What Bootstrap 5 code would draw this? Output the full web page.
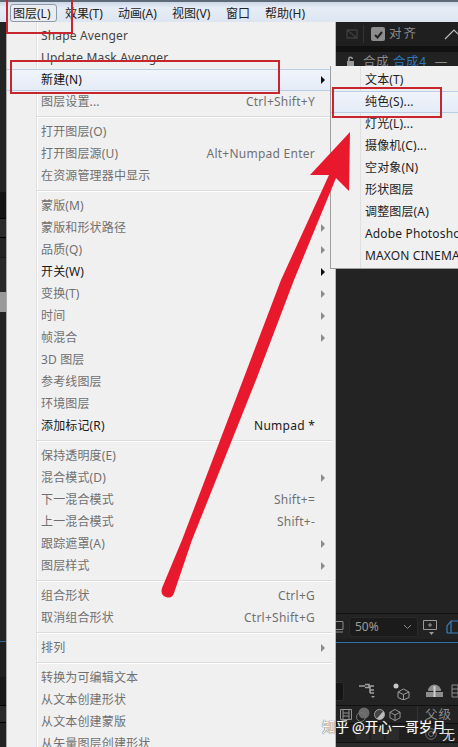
<!DOCTYPE html>
<html lang="zh">
<head>
<meta charset="utf-8">
<title>图层菜单</title>
<link href="https://cdn.jsdelivr.net/npm/bootstrap@5.3.0/dist/css/bootstrap.min.css" rel="stylesheet">
<style>
html,body{margin:0;background:#232323}
.shot{width:458px;height:747px;font:12px/22px "Noto Sans","Noto Sans CJK SC",sans-serif;color:#1c1c1c}
.mbar{height:22px;padding:2px 0 0 10px;background:linear-gradient(#cdd7e6,#e6edf6 30%,#dde5f1);border-top:2px solid #5d6a78;line-height:19px;color:#222}
.mbar span{flex:none;white-space:nowrap}
.m1{width:47px;padding-left:2px;height:18px;border:1px solid #8f9aa8;border-radius:3px;background:#e9edf2;line-height:17px}
.m2{width:54px;padding-left:8px}.m3{width:54px;padding-left:7px}.m4{width:54px;padding-left:7px}.m5{width:39px;padding-left:7px}.m6{padding-left:7px}
.stage{height:725px}
.lstrip{width:6px;background:#232323;flex:none}
.lstrip i{display:block}
.b1{height:170px}.b2{height:26px;background:#131313}.b3{height:20px;background:#2b2b2b;border-top:1px solid #000;border-bottom:1px solid #000}.b4{height:20px;border-bottom:1px solid #1a1a1a}.b5{height:34px;background:#282828}.b6{height:20px;background:#999}.b7{height:329px}.b8{height:36px;background:#1f1f1f;border-top:1px solid #2f6a9c}.b9{height:28px;background:#181818}.b10{height:18px;background:#2a2a2a;border-top:1px solid #000;border-bottom:1px solid #000}
.pop{background-color:#f0f0f0}
.amenu{width:330px;flex:none;padding-top:3px;border-left:1px solid #aaa;border-right:1px solid #b5b5b5;background-image:linear-gradient(90deg,transparent 29px,#e0e0e0 29px,#e0e0e0 30px,#fff 30px,#fff 31px,transparent 31px)}
.mrow{height:22px;line-height:22px;padding-left:34px;color:#707070;white-space:nowrap;letter-spacing:.15px}
.mrow.on{color:#1a1a1a}
.mrow.soft{color:#444}
.mrow.hot{color:#111;background:linear-gradient(#f1f5fb,#e3ebf7);box-shadow:inset 0 1px #b8cde6,inset 0 -1px #b8cde6}
.mkey{margin-left:auto;letter-spacing:.25px}
.marr{flex:none;width:20px;display:flex;align-items:center;padding-left:6px}
.marr::before{content:"";border-left:4px solid #8b8b8b;border-top:4px solid transparent;border-bottom:4px solid transparent}
.on .marr::before,.hot .marr::before{border-left-color:#111}
.msep{height:8px;margin-left:30px;margin-right:3px;padding-top:3px}
.msep::before{content:"";display:block;height:2px;background:linear-gradient(#dcdcdc 50%,#fff 50%)}
.smenu{left:330px;top:66px;width:128px;height:203px;padding-top:3px;border-left:1px solid #a0a0a0;border-bottom:1px solid #a0a0a0;background-image:linear-gradient(90deg,transparent 29px,#e0e0e0 29px,#e0e0e0 30px,transparent 30px);z-index:2}
.smenu .mrow{padding-left:34px;color:#1d1d1d}
.dark{background:#232323;color:#8a8a8a;min-width:0}
.tb1{height:24px;background:#1f1f1f;padding-left:9px;line-height:22px;color:#8c8c8c;font-size:12.5px;letter-spacing:2px;flex:none}
.vdiv{width:1px;height:18px;background:#333;margin:0 7px 0 4px;flex:none}
.chk{width:14px;height:14px;border-radius:2px;background:#8d8d8d;margin-right:4px;flex:none}
.tb2{height:20px;background:#222;border-top:6px solid #111;padding-left:10px;flex:none;font-size:12.5px;line-height:20px;white-space:nowrap;overflow:hidden;letter-spacing:.5px}
.tb2 b{font-weight:400;color:#2f76b8}
.fill{flex:1 1 auto}
.vbar{height:26px;background:#222;border-top:1px solid #111;padding-left:0;flex:none}
.zsel{width:69px;height:20px;margin:0 4px 0 5px;background:#1b1b1b;border:1px solid #2a2a2a;border-radius:3px;padding:0 5px 0 5px;line-height:18px;color:#9b9b9b;font-size:12px;flex:none}
.vline{height:4px;border-bottom:1px solid #2d6fa8;background:#1d1d1d;flex:none}
.gap1{height:34px;flex:none}
.tools{height:28px;flex:none}
.fld{width:8px;height:19px;background:#151515;border:1px solid #2c2c2c;border-left:0;border-radius:0 3px 3px 0;margin-right:15px;flex:none}
.thead{height:19px;flex:none;background:#232323;border-top:1px solid #111;border-bottom:1px solid #111;color:#8d8d8d;font-size:12.5px;letter-spacing:1px;white-space:nowrap}
.thead svg{flex:none}
.tbody{height:19px;background:#1f1f1f;flex:none;padding:4px 0 0 20px;border-bottom:1px solid #111}
.cell{display:block;width:13px;height:12px;background:#2b2b2b;margin-right:2px;flex:none}
.tail{height:4px;background:#2a2a2a;flex:none}
.wmark{left:322px;top:716px;font:13.5px/20px "Noto Sans CJK SC","Noto Sans",sans-serif;color:#fff;white-space:nowrap;z-index:4;text-shadow:0 0 1px #555,0 0 1px #555}
.wnone{left:442px;top:725px;font:13px/18px "Noto Sans CJK SC",sans-serif;color:#ddd;z-index:3}
.marks{left:0;top:0;z-index:3}
</style>
</head>
<body>
<div class="shot position-relative overflow-hidden">
  <div class="mbar d-flex">
    <span class="m1">图层(L)</span><span class="m2">效果(T)</span><span class="m3">动画(A)</span><span class="m4">视图(V)</span><span class="m5">窗口</span><span class="m6">帮助(H)</span>
  </div>
  <div class="stage d-flex">
    <div class="lstrip"><i class="b1"></i><i class="b2"></i><i class="b3"></i><i class="b4"></i><i class="b5"></i><i class="b6"></i><i class="b7"></i><i class="b8"></i><i class="b9"></i><i class="b10"></i></div>
    <div class="amenu pop">
      <div class="mrow soft d-flex"><span>Shape Avenger</span></div>
      <div class="mrow soft d-flex"><span>Update Mask Avenger</span></div>
      <div class="mrow hot d-flex"><span>新建(N)</span><span class="marr ms-auto"></span></div>
      <div class="mrow d-flex"><span>图层设置...</span><span class="mkey">Ctrl+Shift+Y</span><span class="marr invisible"></span></div>
      <div class="msep"></div>
      <div class="mrow d-flex"><span>打开图层(O)</span></div>
      <div class="mrow d-flex"><span>打开图层源(U)</span><span class="mkey">Alt+Numpad Enter</span><span class="marr invisible"></span></div>
      <div class="mrow d-flex"><span>在资源管理器中显示</span></div>
      <div class="msep"></div>
      <div class="mrow d-flex"><span>蒙版(M)</span></div>
      <div class="mrow d-flex"><span>蒙版和形状路径</span><span class="marr ms-auto"></span></div>
      <div class="mrow d-flex"><span>品质(Q)</span><span class="marr ms-auto"></span></div>
      <div class="mrow on d-flex"><span>开关(W)</span><span class="marr ms-auto"></span></div>
      <div class="mrow d-flex"><span>变换(T)</span><span class="marr ms-auto"></span></div>
      <div class="mrow d-flex"><span>时间</span><span class="marr ms-auto"></span></div>
      <div class="mrow d-flex"><span>帧混合</span><span class="marr ms-auto"></span></div>
      <div class="mrow d-flex"><span>3D 图层</span></div>
      <div class="mrow d-flex"><span>参考线图层</span></div>
      <div class="mrow d-flex"><span>环境图层</span></div>
      <div class="mrow on d-flex"><span>添加标记(R)</span><span class="mkey">Numpad *</span><span class="marr invisible"></span></div>
      <div class="msep"></div>
      <div class="mrow d-flex"><span>保持透明度(E)</span></div>
      <div class="mrow d-flex"><span>混合模式(D)</span><span class="marr ms-auto"></span></div>
      <div class="mrow d-flex"><span>下一混合模式</span><span class="mkey">Shift+=</span><span class="marr invisible"></span></div>
      <div class="mrow d-flex"><span>上一混合模式</span><span class="mkey">Shift+-</span><span class="marr invisible"></span></div>
      <div class="mrow d-flex"><span>跟踪遮罩(A)</span><span class="marr ms-auto"></span></div>
      <div class="mrow d-flex"><span>图层样式</span><span class="marr ms-auto"></span></div>
      <div class="msep"></div>
      <div class="mrow d-flex"><span>组合形状</span><span class="mkey">Ctrl+G</span><span class="marr invisible"></span></div>
      <div class="mrow d-flex"><span>取消组合形状</span><span class="mkey">Ctrl+Shift+G</span><span class="marr invisible"></span></div>
      <div class="msep"></div>
      <div class="mrow d-flex"><span>排列</span><span class="marr ms-auto"></span></div>
      <div class="msep"></div>
      <div class="mrow d-flex"><span>转换为可编辑文本</span></div>
      <div class="mrow d-flex"><span>从文本创建形状</span></div>
      <div class="mrow d-flex"><span>从文本创建蒙版</span></div>
      <div class="mrow d-flex"><span>从矢量图层创建形状</span></div>
    </div>
    <div class="dark flex-grow-1 d-flex flex-column overflow-hidden">
      <div class="tb1 d-flex align-items-center">
        <svg class="flex-shrink-0" width="14" height="14" viewBox="0 0 14 14" fill="none" stroke="#3d3d3d" stroke-width="1.3"><path d="M2 3l10 8M2 3v8h10V3H2z"/></svg>
        <span class="vdiv"></span>
        <span class="chk d-flex align-items-center justify-content-center"><svg width="11" height="11" viewBox="0 0 11 11" fill="none" stroke="#222" stroke-width="2"><path d="M2 6l2.500 2.500L9 3"/></svg></span>
        <span>对齐</span>
        <svg class="ms-auto" width="14" height="14" viewBox="0 0 14 14" fill="none" stroke="#bbb" stroke-width="1.2"><path d="M1 12L10 3l4 4"/></svg>
      </div>
      <div class="tb2 d-flex">
        <svg class="flex-shrink-0 mt-1" width="9" height="12" viewBox="0 0 9 12" fill="#9a9a9a"><path d="M1 5h7v7H1zM2 5V3a2.500 2.500 0 0 1 5 0h-1.500a1 1 0 0 0-2 0v2z"/></svg>
        <span class="ms-2">合成</span><b class="ms-1">合成4</b><span class="ms-2">—</span>
      </div>
      <div class="fill"></div>
      <div class="vbar d-flex align-items-center">
        <svg class="flex-shrink-0" width="8" height="14" viewBox="0 0 8 14" fill="none" stroke="#8a8a8a"><path d="M-3 1.500h10v8H-3M0 12h7"/></svg>
        <div class="zsel d-flex align-items-center justify-content-between"><span>50%</span><svg width="9" height="6" viewBox="0 0 9 6" fill="none" stroke="#8a8a8a"><path d="M1 1l3.500 3.500L8 1"/></svg></div>
        <svg class="flex-shrink-0" width="16" height="18" viewBox="0 0 16 18" fill="none" stroke="#9a9a9a"><path d="M1.500 2.500h13v9h-13zM8 5v4M6 7h4"/><path d="M7 14h5l-2.500 3z" fill="#9a9a9a" stroke="none"/></svg>
        <svg class="ms-2 flex-shrink-0" width="20" height="16" viewBox="0 0 20 16" fill="none" stroke="#3b7fc0" stroke-width="1.2"><path d="M1 14V7l4-5h15M1 14h19M5 2v12"/></svg>
      </div>
      <div class="vline"></div>
      <div class="gap1"></div>
      <div class="tools d-flex align-items-center">
        <span class="fld"></span>
        <svg class="flex-shrink-0" width="17" height="16" viewBox="0 0 17 16" fill="none" stroke="#a0a0a0" stroke-width="1.500"><path d="M0 3h6M6 1.500h4v3H6M10 3h5M11 3v7M11 7h4M11 10h4"/><path d="M12 13h4l-2 2z" fill="#a0a0a0" stroke="none"/></svg>
        <svg class="ms-3 flex-shrink-0" width="18" height="18" viewBox="0 0 18 18" fill="none" stroke="#9d9d9d"><path d="M6 10l5.500-3 5.500 3v5.500L11.500 18 6 15.500zM6 10l5.500 2.500L17 10M11.500 12.500V18"/><circle cx="4" cy="4" r="2.500" fill="#c8c8c8" stroke="none"/></svg>
        <svg class="ms-3 flex-shrink-0" width="17" height="14" viewBox="0 0 17 14" fill="#8d8d8d"><path d="M2 7a6.500 6.500 0 0 1 13 0z"/><rect x="0" y="8" width="17" height="5"/><rect x="7.500" y="2" width="2" height="11" fill="#d0d0d0"/></svg>
        <svg class="ms-2 flex-shrink-0" width="8" height="14" viewBox="0 0 8 14" fill="none" stroke="#8d8d8d"><path d="M1 1h6v12H1zM1 5h6M1 9h6"/></svg>
      </div>
      <div class="thead d-flex align-items-center">
        <svg class="ms-1" width="12" height="12" viewBox="0 0 12 12" fill="none" stroke="#929292"><path d="M.5.500h11v10H.5zM3 .5v10M9 .5v10M3 4h6M3 7h6"/></svg>
        <svg class="ms-1" width="14" height="16" viewBox="0 0 14 16"><circle cx="8" cy="6" r="5.500" fill="#6a6a6a"/><circle cx="5" cy="10" r="4.500" fill="none" stroke="#777"/></svg>
        <svg class="ms-1" width="11" height="11" viewBox="0 0 12 12"><circle cx="6" cy="6" r="5.500" fill="#444" stroke="#aaa"/><path d="M10 2.500A5.500 5.500 0 0 1 3 10.700z" fill="#bbb"/></svg>
        <svg class="ms-1" width="12" height="12" viewBox="0 0 13 13" fill="none" stroke="#9d9d9d"><path d="M1 3.500L6.500.5l5.500 3v6l-5.500 3-5.500-3zM1 3.500l5.500 3 5.500-3M6.500 6.500v6"/></svg>
        <span class="vdiv ms-3"></span>
        <span>父级</span>
      </div>
      <div class="tbody d-flex">
        <span class="cell"></span><span class="cell"></span><span class="cell"></span>
        <svg class="ms-4 flex-shrink-0" width="12" height="12" viewBox="0 0 12 12" fill="none" stroke="#6e6e6e"><circle cx="6" cy="6" r="5.300"/><circle cx="6" cy="6" r="2.500"/></svg>
      </div>
      <div class="tail"></div>
    </div>
  </div>

  <div class="smenu pop position-absolute">
    <div class="mrow"><span>文本(T)</span></div>
    <div class="mrow hot"><span>纯色(S)...</span></div>
    <div class="mrow"><span>灯光(L)...</span></div>
    <div class="mrow"><span>摄像机(C)...</span></div>
    <div class="mrow"><span>空对象(N)</span></div>
    <div class="mrow"><span>形状图层</span></div>
    <div class="mrow"><span>调整图层(A)</span></div>
    <div class="mrow"><span>Adobe Photoshop 文件(H)...</span></div>
    <div class="mrow"><span>MAXON CINEMA 4D 文件(C)...</span></div>
  </div>

  <svg class="marks position-absolute" width="458" height="747" viewBox="0 0 458 747" fill="none">
    <g stroke="#c8262e" stroke-width="2">
      <rect x="7" y="-4" width="65" height="37"/>
      <rect x="11" y="61" width="268" height="32"/>
      <rect x="333" y="88" width="108" height="29"/>
    </g>
    <path d="M350 132L310 175L329 175L281 280L243 380L182 540L162 588Q160 595 166 597Q172 599 174 593L192 540L256 380L294 280L336 178L349 191Z" fill="#e8192c"/>
  </svg>
  <div class="wnone position-absolute">无</div>
  <div class="wmark position-absolute">知乎 @开心一哥岁月</div>
</div>
<script src="https://cdn.jsdelivr.net/npm/bootstrap@5.3.0/dist/js/bootstrap.bundle.min.js"></script>
</body>
</html>
